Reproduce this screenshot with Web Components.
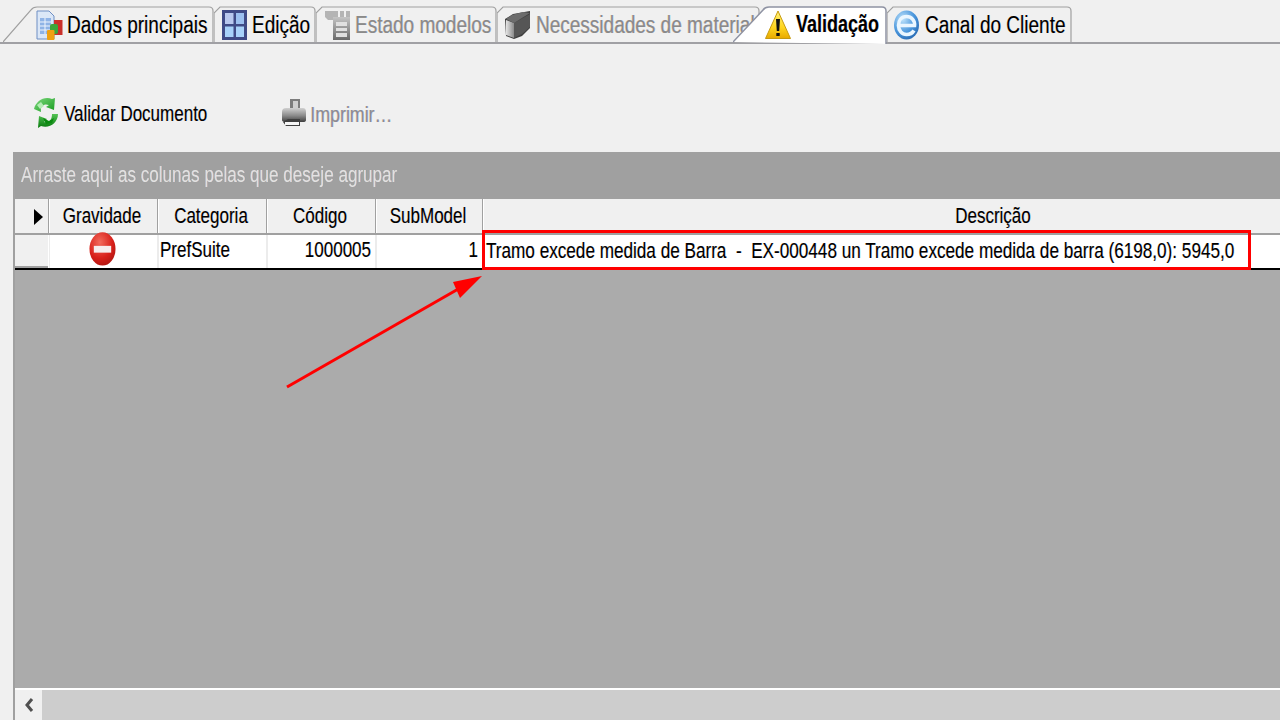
<!DOCTYPE html>
<html lang="pt">
<head>
<meta charset="utf-8">
<title>Validação</title>
<style>
  html, body { margin: 0; height: 720px; overflow: hidden; background: #f0f0f0; }
  body { display: flex; flex-direction: column; font-family: "Liberation Sans", Arial, sans-serif; color: #000; }
</style>
</head>
<body>
<svg width="0" height="0" style="position:absolute">
  <defs>
    <linearGradient id="gray-v" x1="0" y1="0" x2="0" y2="1"><stop offset="0" stop-color="#c4c4c4"/><stop offset="1" stop-color="#6a6a6a"/></linearGradient>
    <linearGradient id="cube-side" x1="0" y1="0" x2="1" y2="0"><stop offset="0" stop-color="#e4e4e4"/><stop offset="1" stop-color="#8a8a8a"/></linearGradient>
    <linearGradient id="warn" x1="0" y1="0" x2="0" y2="1"><stop offset="0" stop-color="#fff27a"/><stop offset=".6" stop-color="#ffd51e"/><stop offset="1" stop-color="#e8a900"/></linearGradient>
    <radialGradient id="ie" cx=".35" cy=".3" r=".85"><stop offset="0" stop-color="#bfe3fb"/><stop offset=".55" stop-color="#4a96dc"/><stop offset="1" stop-color="#1f5ea8"/></radialGradient>
    <linearGradient id="green-a" x1="0" y1="0" x2="1" y2="1"><stop offset="0" stop-color="#7fd97f"/><stop offset="1" stop-color="#149a1c"/></linearGradient>
    <linearGradient id="green-b" x1="0" y1="0" x2="0" y2="1"><stop offset="0" stop-color="#54c354"/><stop offset="1" stop-color="#067a0c"/></linearGradient>
    <linearGradient id="printer" x1="0" y1="0" x2="0" y2="1"><stop offset="0" stop-color="#d0d0d0"/><stop offset=".55" stop-color="#8a8a8a"/><stop offset="1" stop-color="#3f3f3f"/></linearGradient>
    <radialGradient id="stop" cx=".4" cy=".3" r=".8"><stop offset="0" stop-color="#f26a5c"/><stop offset=".6" stop-color="#d8201a"/><stop offset="1" stop-color="#a81410"/></radialGradient>
  </defs>
</svg>

<tab-strip>
  <doc-tab width="211" slant="30" pad="33" gap="4">
    <svg slot="icon" width="27" height="30" viewBox="0 0 27 30">
      <path d="M1 1h12l5 5v23H1z" fill="#dbe7f7" stroke="#6f8fc4"/>
      <path d="M4 8h11v16H4z" fill="#8fb3e6"/>
      <path d="M4 12h11M4 16h11M4 20h11M9 8v16" stroke="#eef4fd"/>
      <rect x="18" y="10" width="8.500" height="15" fill="#c9302a"/>
      <rect x="14" y="14" width="8" height="10" rx="2" fill="#3aa63a"/>
      <rect x="11" y="20" width="7.500" height="10" rx="1" fill="#f0a010"/>
    </svg>
    Dados principais
  </doc-tab>
  <doc-tab width="102" pad="8">
    <svg slot="icon" width="25" height="30" viewBox="0 0 25 30">
      <rect x="0" y="0" width="25" height="30" fill="#3f4a86"/>
      <rect x="3" y="3" width="8.5" height="11" fill="#b9c8ee"/>
      <rect x="14" y="3" width="8" height="11" fill="#9cc0f0"/>
      <rect x="3" y="16.500" width="8.500" height="10.500" fill="#a8d2fa"/>
      <rect x="14" y="16.500" width="8" height="10.500" fill="#a8d2fa"/>
    </svg>
    Edição
  </doc-tab>
  <doc-tab width="181" pad="9" muted>
    <svg slot="icon" width="25" height="30" viewBox="0 0 25 30">
      <path d="M0 1h25v6l-2 3H3L0 7z" fill="#b4b4b4"/>
      <path d="M8 7h17v23H8z" fill="url(#gray-v)"/>
      <path d="M11 12h11v4H11zM11 18h11v3H11zM11 23h11v4H11z" fill="#e0e0e0"/>
      <path d="M13 1h2v6h-2zM19 1h2v6h-2z" fill="#f0f0f0"/>
    </svg>
    Estado modelos
  </doc-tab>
  <doc-tab width="263" pad="8" muted>
    <svg slot="icon" width="26" height="28" viewBox="0 0 26 28">
      <path d="M0 8 8 3 25 0v17l-8 8-8 3-8-3z" fill="#3f3f3f"/>
      <path d="M1 9l8 3v15l-8-3z" fill="url(#cube-side)"/>
      <path d="M9 12 25 3v13l-8 7-8 4z" fill="#565656"/>
      <path d="M1 8l8 4L25 2 18 1 7 4z" fill="#6c6c6c"/>
    </svg>
    Necessidades de material
  </doc-tab>
  <doc-tab width="154" slant="32" pad="32" active>
    <svg slot="icon" width="26" height="30" viewBox="0 0 26 30">
      <path d="M13 1 25.500 28.500H.5z" fill="url(#warn)" stroke="#c79a10" stroke-linejoin="round"/>
      <path d="M11 9h4l-.8 12h-2.400zM11.300 23h3.400v3h-3.400z" fill="#111"/>
    </svg>
    Validação
  </doc-tab>
  <doc-tab width="185" pad="6">
    <svg slot="icon" width="27" height="30" viewBox="0 0 27 30">
      <ellipse cx="13.500" cy="15" rx="12.500" ry="14.500" fill="url(#ie)"/>
      <path d="M6 15.500h15.500c.5-5-3-9-8-9s-8 4-8 9 3.500 9 8 9c3.500 0 6-1.500 7.500-4" fill="none" stroke="#eaf6ff" stroke-width="3.600"/>
    </svg>
    Canal do Cliente
  </doc-tab>
</tab-strip>

<tool-bar>
  <tool-button>
    <svg slot="icon" width="26" height="32" viewBox="0 0 26 32">
      <path d="M1 12C3 4 11-1 19 2l3-1-1 12-8-3 3-2C11 6 7 9 8 15z" fill="url(#green-a)"/>
      <path d="M7 12 4 8l4-3 3 4z" fill="#b4ecb4"/>
      <path d="M25 17c0 9-9 15-17 12l-3 2 1-12 8 3-3 3c5 1 8-2 8-8z" fill="url(#green-b)"/>
      <path d="M10 21l6 3 5-3-2 5-6 1z" fill="#0a8a10"/>
    </svg>
    Validar Documento
  </tool-button>
  <tool-button muted>
    <svg slot="icon" width="26" height="30" viewBox="0 0 26 30">
      <path d="M9 1h10v9H9z" fill="#7c7c7c"/>
      <path d="M12 3h5v7h-5z" fill="#cfcfcf"/>
      <path d="M1 14q0-4 4-4h17q3 0 3 4v8q0 2-3 2H5q-4 0-4-2z" fill="url(#printer)"/>
      <path d="M2 24l5-3h12v7H5z" fill="#3f3f3f"/>
      <path d="M4 24h14v3H4z" fill="#f6f6f6"/>
    </svg>
    Imprimir…
  </tool-button>
</tool-bar>

<data-grid>
  <grid-head slot="head" arrow></grid-head>
  <grid-head slot="head" nudge>Gravidade</grid-head>
  <grid-head slot="head" nudge>Categoria</grid-head>
  <grid-head slot="head" nudge>Código</grid-head>
  <grid-head slot="head" nudge>SubModel</grid-head>
  <grid-head slot="head">Descrição</grid-head>

  <grid-cell slot="row" kind="indicator"></grid-cell>
  <grid-cell slot="row" align="center">
    <svg width="27" height="27" viewBox="0 0 28 28" style="margin:1px 3px 0 0">
      <circle cx="14" cy="14" r="13.500" fill="url(#stop)"/>
      <rect x="5" y="11.500" width="18" height="5.500" fill="#f6eded"/>
    </svg>
  </grid-cell>
  <grid-cell slot="row">PrefSuite</grid-cell>
  <grid-cell slot="row" align="right">1000005</grid-cell>
  <grid-cell slot="row" align="right">1</grid-cell>
  <grid-cell slot="row" kind="description">Tramo excede medida de Barra  -  EX-000448 un Tramo excede medida de barra (6198,0): 5945,0</grid-cell>
</data-grid>

<red-markup></red-markup>

<script>
  const TEXT_CSS = `
    .t {
      display: inline-block;
      white-space: nowrap;
      transform: scaleY(1.28);
      text-shadow: -.5px 0 rgba(255, 150, 0, .28), .5px 0 rgba(0, 110, 255, .28);
    }
  `;

  class TabStrip extends HTMLElement {
    constructor() {
      super();
      this.attachShadow({mode: 'open'}).innerHTML = `
        <style>
          :host {
            display: flex;
            flex: none;
            box-sizing: border-box;
            height: 44px;
            padding: 6px 0 0 3px;
            border-bottom: 2px solid #a0a0a4;
            align-items: flex-start;
          }
        </style>
        <slot></slot>
      `;
    }
  }

  class DocTab extends HTMLElement {
    constructor() {
      super();
      const w = Number(this.getAttribute('width'));
      const slant = Number(this.getAttribute('slant') || 0);
      const active = this.hasAttribute('active');
      const h = active ? 38 : 36;
      let outline;
      if (slant) {
        outline = `M0 36 L${slant - 2} 4 Q${slant} 1 ${slant + 4} 1 H${w - 5} Q${w - 1} 1 ${w - 1} 5 V${h}`;
      } else {
        outline = `M0 ${h} V7 L6 1 H${w - 5} Q${w - 1} 1 ${w - 1} 5 V${h}`;
      }
      this.attachShadow({mode: 'open'}).innerHTML = `
        <style>
          :host {
            position: relative;
            display: flex;
            flex: none;
            box-sizing: border-box;
            width: ${w}px;
            height: ${h}px;
            padding-left: ${this.getAttribute('pad')}px;
            font-size: 19px;
          }
          :host([muted]) { color: #8a8a8a; }
          :host([active]) {
            z-index: 2;
            margin-left: -27px;
            font-weight: bold;
            font-size: 18px;
          }
          svg.edge { position: absolute; left: 0; top: 0; }
          .body {
            position: relative;
            display: flex;
            align-items: center;
            gap: ${this.getAttribute('gap') || 5}px;
            height: 37px;
            min-width: 0;
            flex: 1;
            overflow: hidden;
          }
          ${TEXT_CSS}
        </style>
        <svg class="edge" width="${w}" height="${h}">
          <path d="${outline}" fill="${active ? '#fff' : '#f0f0f0'}" stroke="${active ? '#8f93a3' : '#a0a0a0'}" stroke-width="${active ? 1.5 : 1.2}"/>
        </svg>
        <div class="body">
          <slot name="icon"></slot>
          <span class="t"><slot></slot></span>
        </div>
      `;
    }
  }

  class ToolBar extends HTMLElement {
    constructor() {
      super();
      this.attachShadow({mode: 'open'}).innerHTML = `
        <style>
          :host {
            display: flex;
            flex: none;
            box-sizing: border-box;
            height: 108px;
            padding: 53px 0 0 33px;
            gap: 74px;
            align-items: flex-start;
          }
        </style>
        <slot></slot>
      `;
    }
  }

  class ToolButton extends HTMLElement {
    constructor() {
      super();
      this.attachShadow({mode: 'open'}).innerHTML = `
        <style>
          :host {
            display: flex;
            align-items: center;
            gap: 5px;
            height: 32px;
            font-size: 17px;
          }
          :host([muted]) { color: #8b8b93; gap: 3px; font-size: 17.8px; }
          ${TEXT_CSS}
          .t { position: relative; top: 2px; }
          :host([muted]) .t { top: 1px; }
        </style>
        <slot name="icon"></slot>
        <span class="t"><slot></slot></span>
      `;
    }
  }

  class DataGrid extends HTMLElement {
    constructor() {
      super();
      this.attachShadow({mode: 'open'}).innerHTML = `
        <style>
          :host {
            display: flex;
            flex-direction: column;
            flex: 1;
            min-height: 0;
            margin-left: 13px;
            background: #ababab;
            border-left: 2px solid #a0a0a0;
            overflow: hidden;
          }
          .group {
            flex: none;
            height: 47px;
            margin-left: -2px;
            padding-left: 8px;
            display: flex;
            align-items: center;
            background: #a0a0a0;
            color: #e2e2e2;
            font-size: 17.1px;
          }
          .cols {
            display: grid;
            flex: none;
            grid-template-columns: 33px 107px 107px 107px 105px 1018px;
            column-gap: 2px;
            box-sizing: border-box;
          }
          .head { height: 34px; background: #a0a0a0; }
          .row { height: 35px; border-top: 2px solid #a0a0a0; background: #ececec; }
          .end { flex: none; height: 2px; background: #000; }
          .blank { flex: 1; }
          .scroll {
            flex: none;
            height: 32px;
            box-sizing: border-box;
            border-top: 2px solid #fff;
            display: flex;
            background: #cdcdcd;
          }
          .btn {
            width: 27px;
            background: #f0f0f0;
            display: flex;
            align-items: center;
            justify-content: center;
          }
          ${TEXT_CSS}
        </style>
        <div class="group"><span class="t">Arraste aqui as colunas pelas que deseje agrupar</span></div>
        <div class="cols head"><slot name="head"></slot></div>
        <div class="cols row"><slot name="row"></slot></div>
        <div class="end"></div>
        <div class="blank"></div>
        <div class="scroll">
          <div class="btn">
            <svg width="10" height="14" viewBox="0 0 10 14"><path d="M8 1 3 7l5 6" fill="none" stroke="#505050" stroke-width="3"/></svg>
          </div>
        </div>
      `;
    }
  }

  class GridHead extends HTMLElement {
    constructor() {
      super();
      this.attachShadow({mode: 'open'}).innerHTML = `
        <style>
          :host {
            display: flex;
            align-items: center;
            justify-content: center;
            background: #f0f0f0;
            font-size: 17px;
            box-shadow: -1px 0 0 #fff;
            padding-top: 1px;
          }
          :host([nudge]) { padding-right: 3px; }
          :host([arrow]) { justify-content: flex-end; padding-right: 5px; box-shadow: none; }
          svg { display: none; }
          :host([arrow]) svg { display: block; }
          ${TEXT_CSS}
        </style>
        <svg width="9" height="16" viewBox="0 0 9 16"><path d="M0 0l9 8-9 8z" fill="#000"/></svg>
        <span class="t"><slot></slot></span>
      `;
    }
  }

  class GridCell extends HTMLElement {
    constructor() {
      super();
      this.attachShadow({mode: 'open'}).innerHTML = `
        <style>
          :host {
            display: flex;
            align-items: center;
            padding: 0 4px 2px 1px;
            box-sizing: border-box;
            background: #fff;
            font-size: 17px;
            min-width: 0;
            height: 33px;
          }
          :host([align="center"]) { justify-content: center; padding: 0; }
          :host([align="right"]) { justify-content: flex-end; }
          :host([kind="indicator"]) { background: #f0f0f0; border-bottom: 2px solid #a0a0a0; box-shadow: 1px 0 0 #fff; }
          :host([kind="description"]) { font-size: 17.15px; padding-left: 2px; }
          ${TEXT_CSS}
          :host([kind="description"]) .t { white-space: pre; }
        </style>
        <span class="t"><slot></slot></span>
      `;
    }
  }

  // anotacao vermelha por cima da grelha
  class RedMarkup extends HTMLElement {
    constructor() {
      super();
      this.attachShadow({mode: 'open'}).innerHTML = `
        <style>
          :host { position: absolute; left: 0; top: 0; width: 1280px; height: 720px; pointer-events: none; z-index: 5; }
          .box { position: absolute; left: 482px; top: 230px; width: 769px; height: 40px; box-sizing: border-box; border: 3px solid #f00; }
          svg { position: absolute; left: 0; top: 0; }
        </style>
        <div class="box"></div>
        <svg width="1280" height="720">
          <path d="M287 387 L460 288" stroke="#f00" stroke-width="3" fill="none"/>
          <path d="M482 276 L453 282 L460 298 z" fill="#f00"/>
        </svg>
      `;
    }
  }

  customElements.define('tab-strip', TabStrip);
  customElements.define('doc-tab', DocTab);
  customElements.define('tool-bar', ToolBar);
  customElements.define('tool-button', ToolButton);
  customElements.define('data-grid', DataGrid);
  customElements.define('grid-head', GridHead);
  customElements.define('grid-cell', GridCell);
  customElements.define('red-markup', RedMarkup);
</script>
</body>
</html>
